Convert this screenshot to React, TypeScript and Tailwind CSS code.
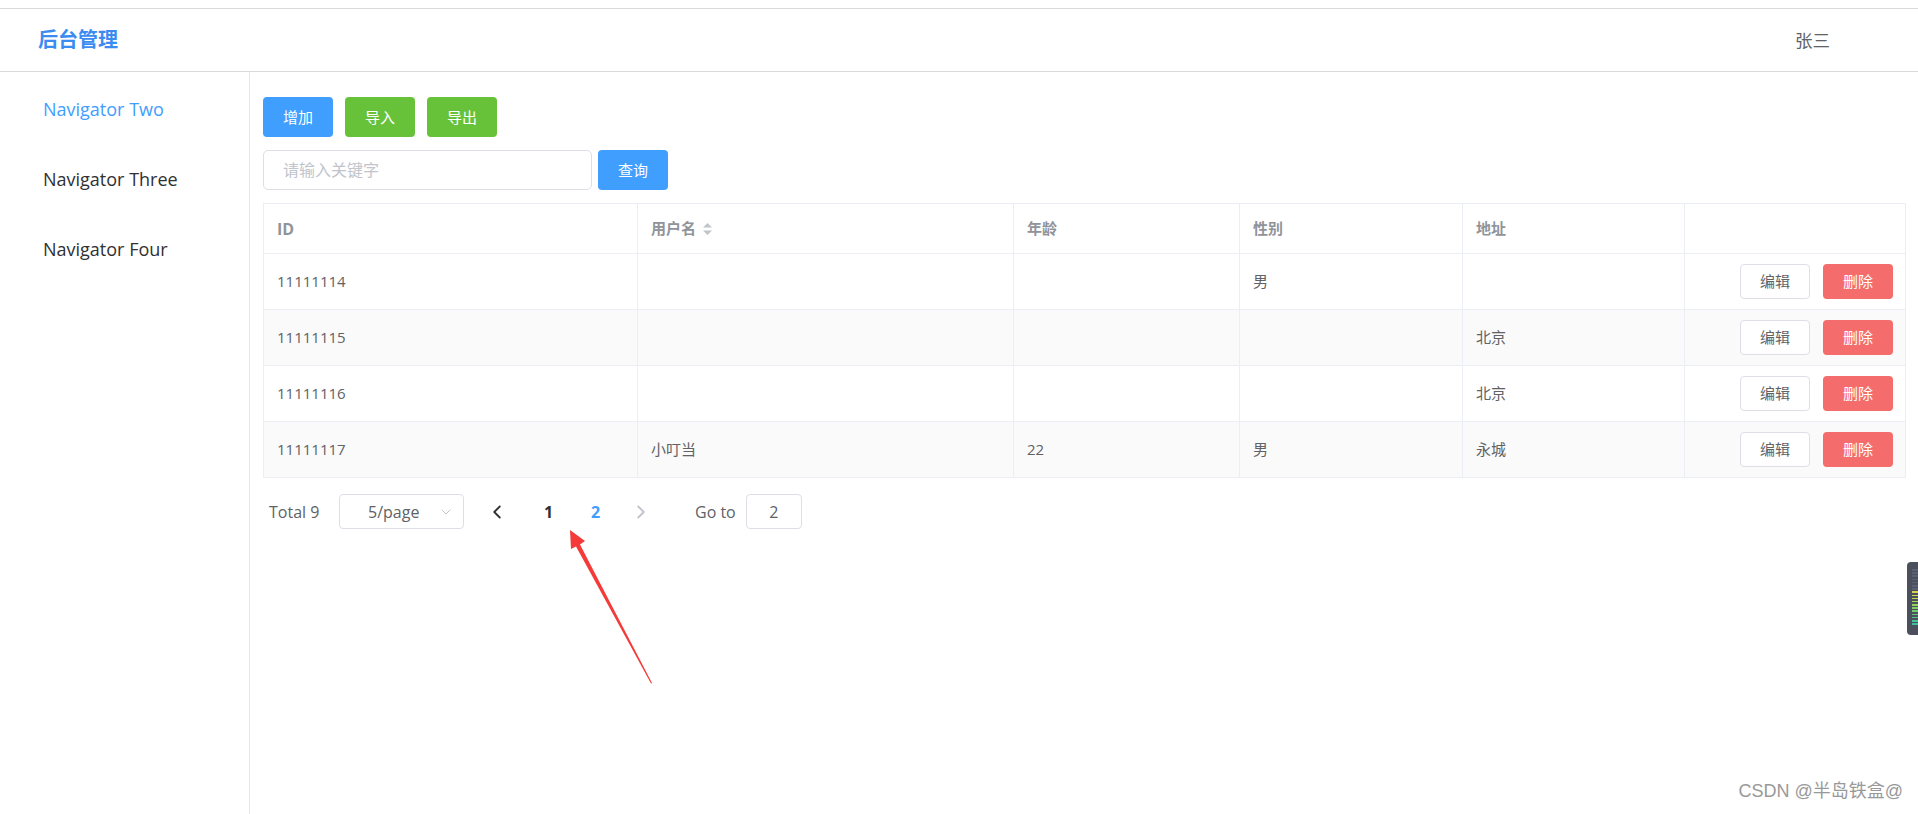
import React from "react";
import { ChevronDown, ChevronLeft, ChevronRight } from "lucide-react";

const font = "font-['Open_Sans','Noto_Sans_CJK_SC',sans-serif]";

type Row = { id: string; name: string; age: string; sex: string; addr: string };

const rows: Row[] = [
  { id: "11111114", name: "", age: "", sex: "男", addr: "" },
  { id: "11111115", name: "", age: "", sex: "", addr: "北京" },
  { id: "11111116", name: "", age: "", sex: "", addr: "北京" },
  { id: "11111117", name: "小叮当", age: "22", sex: "男", addr: "永城" },
];

const cols = "grid grid-cols-[374px_376px_226px_223px_222px_1fr]";
const cell = "flex items-center pl-[13px] border-r border-[#ebeef5]";

function SortCaret() {
  return (
    <svg width="11" height="14" viewBox="0 0 11 14" className="ml-[6px]">
      <path d="M5.5 1 L10 5.5 L1 5.5 Z" fill="#c0c4cc" />
      <path d="M5.5 13 L10 8.5 L1 8.5 Z" fill="#c0c4cc" />
    </svg>
  );
}

function Meter() {
  const colors = [
    "#5b6170", "#5b6170", "#5b6170", "#5b6170", "#5b6170", "#5b6170", "#5b6170",
    "#d8d24a", "#d2d94c", "#c2d94e", "#a9d653", "#93d35a", "#7fd063", "#6ccc6e",
    "#5cc97a", "#50c588", "#47c294", "#40bfa0",
  ];
  return (
    <div className="absolute left-[1907px] top-[562px] w-[12px] h-[73px] bg-[#4b505c] rounded-l-[4px] flex flex-col gap-[1.6px] pt-[7px] pl-[5px]">
      {colors.map((c, i) => (
        <div key={i} className="h-[1.6px] w-[7px]" style={{ background: c }} />
      ))}
    </div>
  );
}

export default function App() {
  return (
    <div className={`relative w-[1918px] h-[814px] bg-white overflow-hidden ${font}`}>
      <div className="h-[8px]" />
      <header className="h-[64px] border-y border-[#d9d9d9] flex items-center justify-between pl-[38px] pr-[88px]">
        <div className="text-[20px] font-bold text-[#3a8cf0]">后台管理</div>
        <div className="text-[17.5px] text-[#606266]">张三</div>
      </header>

      <div className="flex h-[742px]">
        <aside className="w-[250px] shrink-0 border-r border-[#e6e6e6] pt-[2px]">
          {["Navigator Two", "Navigator Three", "Navigator Four"].map((n, i) => (
            <div
              key={n}
              className={`h-[70px] flex items-center pl-[43px] text-[18px] ${i === 0 ? "text-[#409eff]" : "text-[#303133]"}`}
            >
              {n}
            </div>
          ))}
        </aside>

        <main className="flex-1 pl-[13px] pr-[12px] pt-[25px]">
          <div className="flex gap-[12px]">
            <button className="w-[70px] h-[40px] rounded-[4px] bg-[#409eff] text-white text-[15px]">增加</button>
            <button className="w-[70px] h-[40px] rounded-[4px] bg-[#67c23a] text-white text-[15px]">导入</button>
            <button className="w-[70px] h-[40px] rounded-[4px] bg-[#67c23a] text-white text-[15px]">导出</button>
          </div>

          <div className="flex items-center gap-[6px] mt-[12px]">
            <div className="w-[329px] h-[40px] rounded-[5px] border border-[#dcdfe6] flex items-center pl-[19px] text-[16px] text-[#c0c4cc]">
              请输入关键字
            </div>
            <button className="w-[70px] h-[40px] mt-[1px] rounded-[4px] bg-[#409eff] text-white text-[15px]">查询</button>
          </div>

          <div className="mt-[13px] border-t border-x border-[#ebeef5] text-[15px]">
            <div className={`${cols} h-[50px] border-b border-[#ebeef5] font-bold text-[#909399]`}>
              <div className={`${cell} text-[16px]`}>ID</div>
              <div className={cell}>
                用户名
                <SortCaret />
              </div>
              <div className={cell}>年龄</div>
              <div className={cell}>性别</div>
              <div className={cell}>地址</div>
              <div className="" />
            </div>
            {rows.map((r, i) => (
              <div
                key={r.id}
                className={`${cols} h-[56px] border-b border-[#ebeef5] text-[#606266] ${i % 2 === 1 ? "bg-[#fafafa]" : "bg-white"}`}
              >
                <div className={cell}>{r.id}</div>
                <div className={cell}>{r.name}</div>
                <div className={cell}>{r.age}</div>
                <div className={cell}>{r.sex}</div>
                <div className={cell}>{r.addr}</div>
                <div className="flex items-center justify-end gap-[13px] pr-[12px]">
                  <button className="w-[70px] h-[35px] rounded-[4px] bg-white border border-[#dcdfe6] text-[#606266] text-[15px]">
                    编辑
                  </button>
                  <button className="w-[70px] h-[35px] rounded-[4px] bg-[#f56c6c] text-white text-[15px]">删除</button>
                </div>
              </div>
            ))}
          </div>

          <div className="flex items-center h-[35px] mt-[16px] text-[16px] text-[#606266]">
            <span className="ml-[6px] w-[70px]">Total 9</span>
            <div className="w-[125px] h-[35px] rounded-[4px] border border-[#dcdfe6] flex items-center justify-between pl-[28px] pr-[9px]">
              <span>5/page</span>
              <ChevronDown size={16} strokeWidth={1.5} color="#c0c4cc" />
            </div>
            <span className="ml-[11px] w-[44px] flex justify-center text-[#303133]">
              <ChevronLeft size={22} strokeWidth={2} />
            </span>
            <span className="ml-[6px] w-[47px] text-center font-bold text-[#303133]">1</span>
            <span className="w-[47px] text-center font-bold text-[#409eff]">2</span>
            <span className="w-[44px] flex justify-center text-[#c0c4cc]">
              <ChevronRight size={22} strokeWidth={2} />
            </span>
            <span className="ml-[32px]">Go to</span>
            <div className="ml-[10px] w-[56px] h-[35px] rounded-[4px] border border-[#dcdfe6] flex items-center justify-center">
              2
            </div>
          </div>
        </main>
      </div>

      <svg className="absolute left-[560px] top-[525px]" width="100" height="165" viewBox="0 0 100 165">
        <polygon points="10,5 25,16 20,19.5 92,158 91,158.5 16,21.5 11,24" fill="#f53a3a" />
      </svg>

      <Meter />

      <div className="absolute right-[15px] bottom-[9px] text-[18px] text-[#999] font-['Liberation_Sans','Noto_Sans_CJK_SC',sans-serif] [text-shadow:0_0_2px_#fff]">
        CSDN @半岛铁盒@
      </div>
    </div>
  );
}
